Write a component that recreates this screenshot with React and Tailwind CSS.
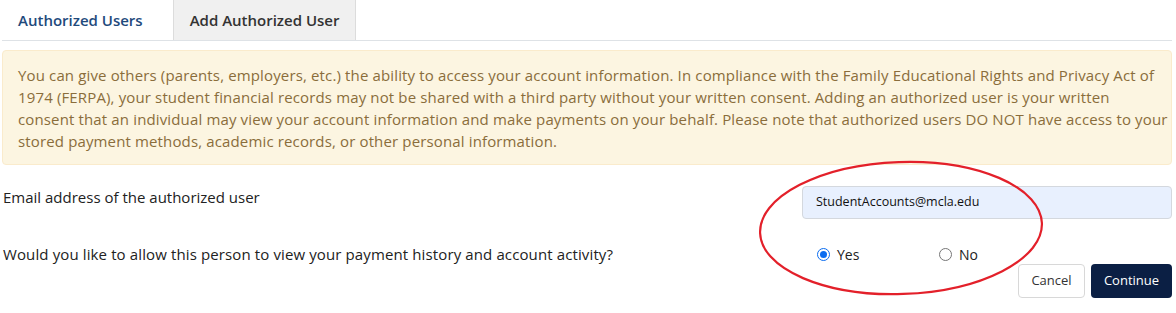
export default function App() {
  const font = { fontFamily: '"Open Sans", "Noto Sans", sans-serif' };
  return (
    <div className="relative w-[1176px] h-[313px] bg-white overflow-hidden" style={font}>
      <div className="ml-[2px] w-[1170px]">
        {/* Tabs */}
        <div className="flex h-[41px] border-b border-[#dee2e6]">
          <div className="flex items-center pl-[16px] pr-[30px] text-[15px] font-semibold text-[#1f4a7c]">Authorized Users</div>
          <div className="flex items-center px-[16px] bg-[#f0f0f0] border-x border-[#dcdcdc] text-[15px] font-semibold text-[#333]">Add Authorized User</div>
        </div>
        {/* Alert */}
        <div className="mt-[9px] h-[115px] rounded-[4px] border border-[#faebcc] bg-[#fcf5e1] px-[15px] pt-[13px] text-[15px] tracking-[0.14px] leading-[22px] text-[#8a6d3b]">
          <div className="whitespace-nowrap">You can give others (parents, employers, etc.) the ability to access your account information. In compliance with the Family Educational Rights and Privacy Act of</div>
          <div className="whitespace-nowrap">1974 (FERPA), your student financial records may not be shared with a third party without your written consent. Adding an authorized user is your written</div>
          <div className="whitespace-nowrap">consent that an individual may view your account information and make payments on your behalf. Please note that authorized users DO NOT have access to your</div>
          <div className="whitespace-nowrap">stored payment methods, academic records, or other personal information.</div>
        </div>
        {/* Email row */}
        <div className="mt-[21px] flex items-start h-[33px]">
          <div className="flex-1 pl-[1px] pt-[0px] text-[15px] leading-[22px] text-[#222]">Email address of the authorized user</div>
          <div className="w-[370px] h-[33px] rounded-[4px] border border-[#d4d8de] bg-[#e8f0fe] flex items-center px-[13px] text-[12.5px] text-[#111]">StudentAccounts@mcla.edu</div>
        </div>
        {/* Question row */}
        <div className="mt-[22px] flex items-center h-[26px]">
          <div className="flex-1 pl-[1px] text-[15px] tracking-[0.12px] text-[#222]">Would you like to allow this person to view your payment history and account activity?</div>
          <div className="w-[370px] flex items-center pl-[15px] text-[14px] text-[#222]">
            <div className="flex items-center w-[122px]">
              <span className="w-[13px] h-[13px] rounded-full border-[1.5px] border-[#0a6cf0] flex items-center justify-center">
                <span className="w-[7px] h-[7px] rounded-full bg-[#0a6cf0]" />
              </span>
              <span className="ml-[7px]">Yes</span>
            </div>
            <div className="flex items-center">
              <span className="w-[13px] h-[13px] rounded-full border border-[#767676]" />
              <span className="ml-[7px]">No</span>
            </div>
          </div>
        </div>
        {/* Buttons */}
        <div className="mt-[-3px] flex justify-end gap-[6px]">
          <button className="h-[34px] w-[67px] rounded-[4px] border border-[#d8d8d8] bg-white text-[13px] text-[#333]">Cancel</button>
          <button className="h-[34px] w-[81px] rounded-[4px] bg-[#0b1f44] text-[13px] text-white">Continue</button>
        </div>
      </div>
      {/* Red annotation ellipse */}
      <svg className="absolute left-0 top-0 pointer-events-none" width="1176" height="313">
        <ellipse cx="901" cy="228" rx="141" ry="66" fill="none" stroke="#e3202a" strokeWidth="2.2" transform="rotate(-2 901 228)" />
      </svg>
    </div>
  );
}
